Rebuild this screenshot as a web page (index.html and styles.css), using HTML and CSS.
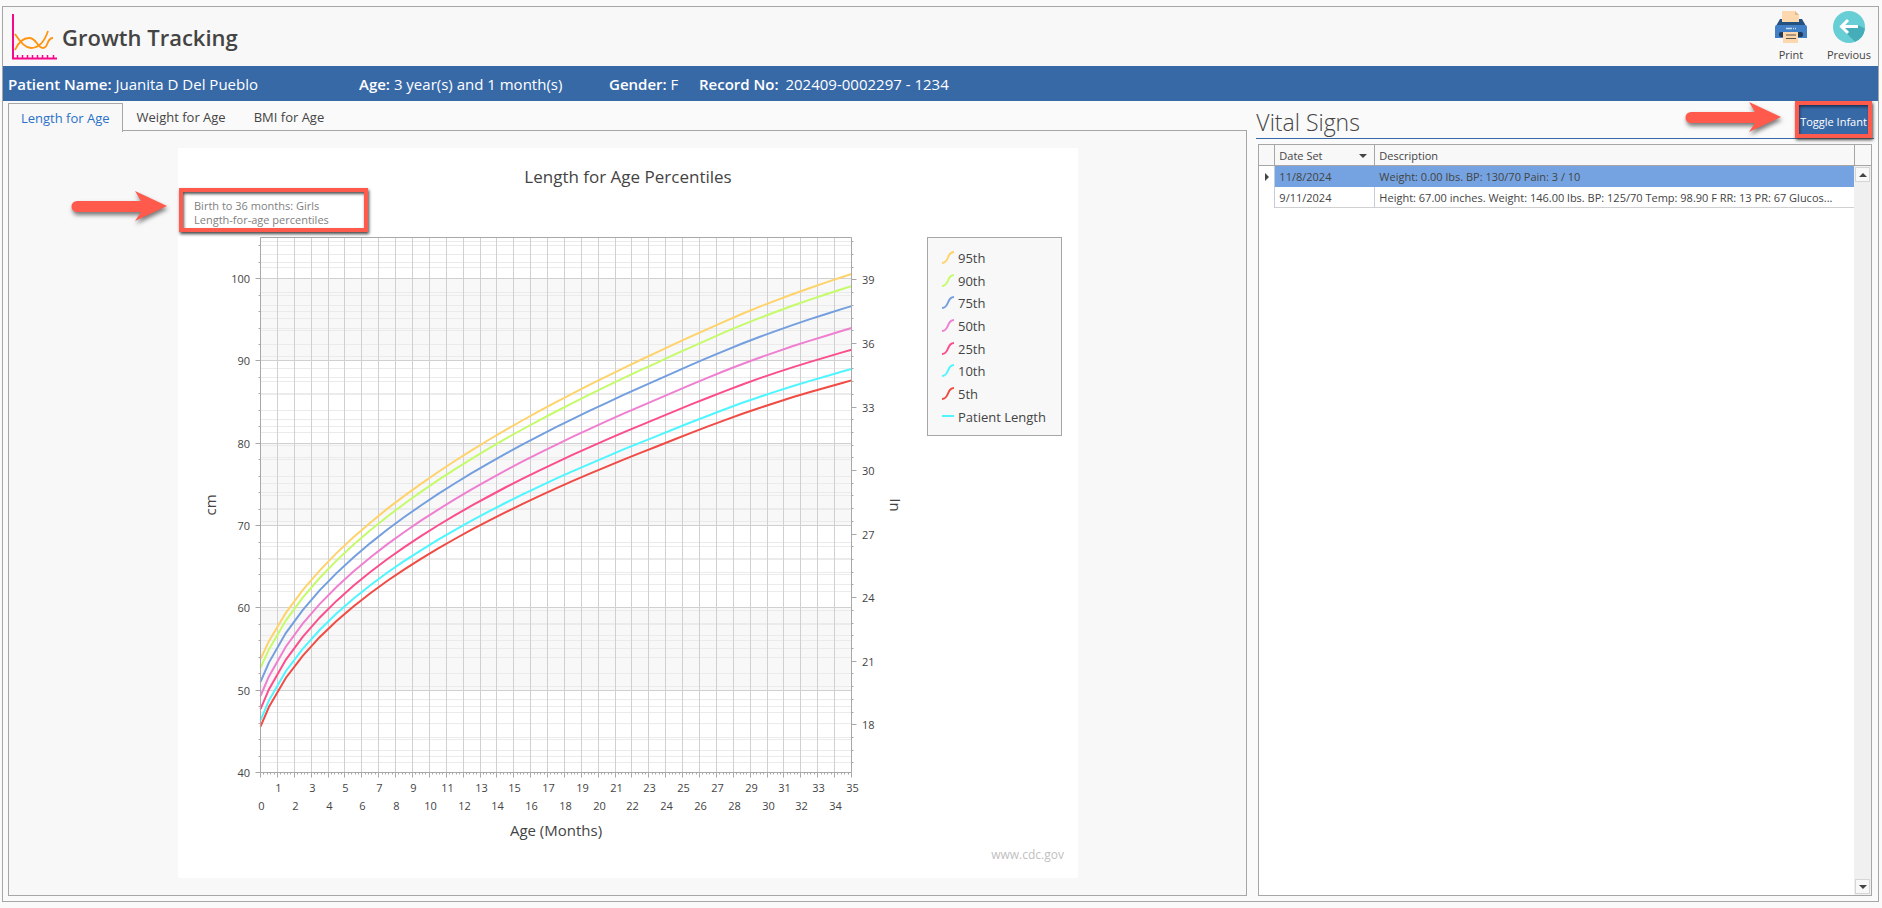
FILE: index.html
```html
<!DOCTYPE html>
<html lang="en">
<head>
  <meta charset="UTF-8" />
  <meta name="viewport" content="width=device-width, initial-scale=1.0"/>
  <title>Growth Tracking</title>
  <link rel="stylesheet" href="styles.css">
</head>
<body>

  <div class="window">
    <header class="header">
      <svg class="logo" viewBox="0 0 46 46" width="46" height="46" aria-hidden="true">
        <path d="M1 0V44.500H45" fill="none" stroke="#f7078a" stroke-width="2"/>
        <path d="M5.500 44v-3M10.500 44v-3M15.500 44v-3M20.500 44v-3M25.500 44v-3M30.500 44v-3M35.500 44v-3M41.500 44v-3" stroke="#f7078a" stroke-width="1.500"/>
        <path d="M3 20C8 28 13 34 19 34C28 34 33 26 36 17M3 36C7 27 12 24 17 24C25 24 25 34 31 34C37 34 34 24 41 24" fill="none" stroke="#ff9410" stroke-width="1.800"/>
      </svg>
      <h1>Growth Tracking</h1>
      <div class="actions">
        <button class="action" type="button">
          <svg viewBox="0 0 32 32" width="32" height="32" aria-hidden="true">
            <path d="M5 8h22l4 7H1z" fill="#25517f"/>
            <path d="M7 0h13l4 4v7H7z" fill="#fdd7ad"/>
            <path d="M20 0l4 4h-4z" fill="#dfb98e"/>
            <path d="M0 16q0-2 2-2h28q2 0 2 2v11H0z" fill="#4180c6"/>
            <path d="M11 17.500h6M18 17.500h1M20 17.500h1" stroke="#c5daf0" stroke-width="1.500"/>
            <rect x="4" y="21" width="24" height="5" rx="2" fill="#233d58"/>
            <path d="M8 21h15v11H8z" fill="#fdd7ad"/>
            <path d="M11 24h10M11 27.500h10" stroke="#5f5247" stroke-width="1"/>
          </svg>
          <span>Print</span>
        </button>
        <button class="action" type="button">
          <svg viewBox="0 0 32 32" width="32" height="32" aria-hidden="true">
            <circle cx="16" cy="16" r="16" fill="#68ced6"/>
            <path d="M8 17L22 30.800A16 16 0 0 0 31.900 17.500L25 14z" fill="#45adb7"/>
            <path d="M25 15.500H9M15 9L8.500 15.500L15 22" fill="none" stroke="#fff" stroke-width="3"/>
          </svg>
          <span>Previous</span>
        </button>
      </div>
    </header>

    <div class="patient-bar">
      <div><b>Patient Name:</b> Juanita D Del Pueblo</div>
      <div><b>Age:</b> 3 year(s) and 1 month(s)</div>
      <div><b>Gender:</b> F</div>
      <div class="record"><b>Record No:</b> <span>202409-0002297 - 1234</span></div>
    </div>

    <main class="content">
      <section class="charts">
        <div class="tabs" role="tablist">
          <button class="tab active" role="tab" type="button" aria-selected="true">Length for Age</button>
          <button class="tab" role="tab" type="button">Weight for Age</button>
          <button class="tab" role="tab" type="button">BMI for Age</button>
        </div>
        <div class="tab-panel">
          <div class="sheet">
            <svg id="chart" class="chart" viewBox="0 0 900 730"></svg>
            <div class="callout callout-subtitle"></div>
            <svg class="arrow arrow-subtitle" viewBox="0 0 98 34" width="98" height="34" aria-hidden="true">
              <path d="M6 11H70L64 1L96 16L64 31L70 22L6 22A5.500 5.500 0 0 1 6 11z"/>
            </svg>
          </div>
        </div>
      </section>

      <section class="vitals">
        <div class="vitals-head">
          <h2>Vital Signs</h2>
          <button class="toggle" type="button">Toggle Infant</button>
          <svg class="arrow arrow-toggle" viewBox="0 0 98 34" width="98" height="34" aria-hidden="true">
            <path d="M6 11H70L64 1L96 16L64 31L70 22L6 22A5.500 5.500 0 0 1 6 11z"/>
          </svg>
        </div>
        <div class="grid-box">
          <table>
            <thead>
              <tr>
                <th class="marker"></th>
                <th class="date">Date Set <i class="triangle down"></i></th>
                <th>Description</th>
              </tr>
            </thead>
            <tbody>
              <tr class="selected">
                <td class="marker"><i class="triangle right"></i></td>
                <td>11/8/2024</td>
                <td>Weight: 0.00 lbs. BP: 130/70 Pain: 3 / 10</td>
              </tr>
              <tr>
                <td class="marker"></td>
                <td>9/11/2024</td>
                <td>Height: 67.00 inches. Weight: 146.00 lbs. BP: 125/70 Temp: 98.90 F RR: 13 PR: 67 Glucos...</td>
              </tr>
            </tbody>
          </table>
          <div class="scroll">
            <div class="scroll-head"></div>
            <div class="scroll-track">
              <button type="button" aria-label="Scroll up"><i class="triangle up"></i></button>
              <button type="button" aria-label="Scroll down"><i class="triangle down"></i></button>
            </div>
          </div>
        </div>
      </section>
    </main>
  </div>

  <script>
    const chart = document.getElementById("chart");

    // plot area inside the 900x730 sheet
    const plot = { left: 82.5, top: 89.5, right: 673.5, bottom: 624.5 };
    const months = 35;
    const cmMin = 40, cmMax = 105;
    const inMin = 15.75, inMax = 41;

    const series = [
      { name: "95th", z: 1.645, color: "#ffd36b" },
      { name: "90th", z: 1.282, color: "#c5fb6b" },
      { name: "75th", z: 0.674, color: "#749fdf" },
      { name: "50th", z: 0, color: "#ef7fd0" },
      { name: "25th", z: -0.674, color: "#fb4e8c" },
      { name: "10th", z: -1.282, color: "#4ff5ff" },
      { name: "5th", z: -1.645, color: "#f04b45" }
    ];

    // age in months, L, M, S
    const lms = [
      [0, -1.296, 49.29, 0.0501], [0.5, -0.809, 51.68, 0.0468], [1.5, -0.051, 55.29, 0.0434],
      [2.5, 0.477, 58.09, 0.0417], [3.5, 0.843, 60.46, 0.0407], [4.5, 1.098, 62.54, 0.0401],
      [5.5, 1.273, 64.41, 0.0397], [6.5, 1.39, 66.12, 0.0394], [7.5, 1.467, 67.71, 0.0393],
      [8.5, 1.512, 69.19, 0.0392], [9.5, 1.535, 70.59, 0.0392], [10.5, 1.54, 71.92, 0.0392],
      [11.5, 1.533, 73.19, 0.0393], [12.5, 1.516, 74.4, 0.0394], [13.5, 1.49, 75.56, 0.0395],
      [14.5, 1.46, 76.68, 0.0396], [15.5, 1.42, 77.76, 0.0397], [16.5, 1.38, 78.8, 0.0398],
      [17.5, 1.34, 79.81, 0.0399], [18.5, 1.3, 80.8, 0.04], [19.5, 1.25, 81.75, 0.0402],
      [20.5, 1.2, 82.68, 0.0403], [21.5, 1.16, 83.6, 0.0404], [22.5, 1.12, 84.49, 0.0406],
      [23.5, 1.08, 85.36, 0.0407], [24.5, 1.04, 86.25, 0.0408], [25.5, 1, 87.12, 0.0409],
      [26.5, 0.95, 87.97, 0.041], [27.5, 0.9, 88.8, 0.0411], [28.5, 0.85, 89.6, 0.0412],
      [29.5, 0.8, 90.36, 0.0413], [30.5, 0.75, 91.08, 0.0414], [31.5, 0.7, 91.78, 0.0415],
      [32.5, 0.65, 92.44, 0.0416], [33.5, 0.6, 93.07, 0.0417], [34.5, 0.56, 93.7, 0.0418],
      [35, 0.55, 94, 0.0418]
    ];

    const xPos = m => plot.left + m * (plot.right - plot.left) / months;
    const cmPos = v => plot.bottom - (v - cmMin) * (plot.bottom - plot.top) / (cmMax - cmMin);
    const inPos = v => plot.bottom - (v - inMin) * (plot.bottom - plot.top) / (inMax - inMin);
    const snap = v => Math.floor(v) + 0.5;

    let out = "";

    function line(x1, y1, x2, y2, cls) {
      out += `<line x1="${x1}" y1="${y1}" x2="${x2}" y2="${y2}" class="${cls}"/>`;
    }

    function label(x, y, text, cls) {
      out += `<text x="${x}" y="${y}" class="${cls}">${text}</text>`;
    }

    // bands
    for (const top of [100, 80, 60]) {
      out += `<rect x="${plot.left}" y="${cmPos(top)}" width="${plot.right - plot.left}" height="${cmPos(top - 10) - cmPos(top)}" class="band"/>`;
    }

    // minor grid
    for (let v = 42; v < cmMax; v += 2) {
      const y = snap(cmPos(v));
      if (v % 10) {
        line(plot.left, y, plot.right, y, "minor");
        line(plot.left - 2, y, plot.left, y, "axis");
      }
    }
    for (let i = -3; i <= 38; i++) {
      const v = 18 + i * 0.6;
      const y = snap(inPos(v));
      if (i % 5) {
        line(plot.left, y, plot.right, y, "minor");
        line(plot.right, y, plot.right + 2, y, "axis");
      } else {
        line(plot.right, y, plot.right + 5, y, "axis");
        label(684, y + 4, Math.round(v), "tick");
      }
    }

    // major grid
    for (let m = 0; m <= months; m++) {
      const x = snap(xPos(m));
      line(x, plot.top, x, plot.bottom, "major");
      line(x, plot.bottom, x, plot.bottom + 5, "axis");
      label(x + 1, m % 2 ? 644 : 662, m, "tick middle");
      for (let k = 1; k < 5 && m < months; k++) {
        const t = snap(xPos(m + k / 5));
        line(t, plot.bottom, t, plot.bottom + 2, "axis");
      }
    }
    for (let v = 40; v <= 100; v += 10) {
      const y = snap(cmPos(v));
      line(plot.left, y, plot.right, y, "major");
      line(plot.left - 5, y, plot.left, y, "axis");
      label(72, y + 4, v, "tick end");
    }

    // percentile curves
    for (const s of series.slice().reverse()) {
      const points = lms.map(([age, L, M, S]) => {
        const value = M * Math.pow(1 + L * S * s.z, 1 / L);
        return xPos(age).toFixed(1) + "," + cmPos(value).toFixed(1);
      });
      out += `<polyline points="${points.join(" ")}" class="curve" stroke="${s.color}"/>`;
    }

    out += `<path d="M${plot.left} ${plot.top}V${plot.bottom}H${plot.right}V${plot.top}z" class="axis"/>`;

    label(450, 35, "Length for Age Percentiles", "title middle");
    label(16, 62, "Birth to 36 months: Girls", "subtitle");
    label(16, 76, "Length-for-age percentiles", "subtitle");
    label(378, 688, "Age (Months)", "axis-title middle");
    out += `<text transform="translate(38 357) rotate(-90)" class="axis-title middle">cm</text>`;
    out += `<text transform="translate(712 357) rotate(90)" class="axis-title middle">In</text>`;
    label(886, 711, "www.cdc.gov", "source end");

    // legend
    out += `<rect x="749.5" y="89.500" width="134" height="198" class="legend"/>`;
    series.forEach((s, i) => {
      const y = Math.round(110 + i * 22.67);
      out += `<path d="M764 ${y + 5}c8 0 4 -11 12 -11" class="curve" stroke="${s.color}"/>`;
      label(780, y + 5, s.name, "legend-text");
    });
    out += `<path d="M764 268h12" class="curve" stroke="#4ff5ff"/>`;
    label(780, 274, "Patient Length", "legend-text");

    chart.innerHTML = out;
  </script>

</body>
</html>
```
FILE: styles.css
```css
:root {
  --blue: #3869a7;
  --line: #a6a6a6;
  --text: #444;
  --red: #ff5a4c;
  --panel: #f8f8f8;
}

* {
  box-sizing: border-box;
}

body {
  margin: 0;
  height: 100vh;
  padding: 6px 3px 6px 2px;
  background: #fafafa;
  color: var(--text);
  font-family: "Open Sans", "Noto Sans", sans-serif;
  font-size: 12px;
}

button {
  font: inherit;
  color: inherit;
  border: none;
  background: none;
  padding: 0;
  cursor: pointer;
}

.window {
  display: flex;
  flex-direction: column;
  height: 100%;
  border: 1px solid var(--line);
}

.header {
  display: flex;
  align-items: center;
  height: 59px;
  padding: 0 4px 0 9px;
  background: var(--panel);
}

h1 {
  margin: 0 0 0 4px;
  font-size: 22px;
  font-weight: 600;
}

.actions {
  display: flex;
  align-self: flex-start;
  gap: 8px;
  margin: 4px 0 0 auto;
}

.action {
  display: flex;
  flex-direction: column;
  align-items: center;
  gap: 3px;
  min-width: 50px;
  font-size: 11px;
  line-height: 18px;
}

.patient-bar {
  display: grid;
  grid-template-columns: 351px 250px 90px auto;
  align-items: center;
  height: 35px;
  flex: none;
  padding-left: 5px;
  background: var(--blue);
  color: #fff;
  font-size: 15px;
  white-space: nowrap;
}

.patient-bar b {
  font-weight: 600;
}

.record span {
  margin-left: 3px;
}

.content {
  display: flex;
  flex: 1;
  gap: 9px;
  min-height: 0;
  padding: 2px 4px 5px 5px;
}

.charts {
  display: flex;
  flex: 1;
  flex-direction: column;
  min-width: 0;
}

.tabs {
  display: flex;
  height: 28px;
}

.tab {
  padding: 0 14px;
  font-size: 13px;
}

.tab.active {
  margin-bottom: -1px;
  padding: 0 12px;
  border: 1px solid var(--line);
  border-bottom: none;
  background: var(--panel);
  color: #2a72c8;
  z-index: 1;
}

.tab-panel {
  flex: 1;
  min-height: 0;
  margin-top: -1px;
  padding-top: 17px;
  border: 1px solid var(--line);
  background: var(--panel);
}

.sheet {
  position: relative;
  width: 100%;
  max-width: 900px;
  margin: 0 auto;
  background: #fff;
}

.chart {
  display: block;
  width: 100%;
  fill: var(--text);
}

.chart .band {
  fill: #f8f8f8;
}

.chart .minor {
  stroke: #ebebeb;
}

.chart .major {
  stroke: #d0d0d0;
}

.chart .axis {
  fill: none;
  stroke: #a8a8a8;
}

.chart .curve {
  fill: none;
  stroke-width: 2;
}

.chart .legend {
  fill: #f8f8f8;
  stroke: #a6a6a6;
}

.title {
  font-size: 17px;
}

.axis-title {
  font-size: 15px;
}

.legend-text {
  font-size: 13px;
}

.tick {
  font-size: 11px;
}

.subtitle {
  font-size: 11px;
  fill: #7f7f7f;
}

.source {
  font-size: 12px;
  fill: #bfbfbf;
}

.middle {
  text-anchor: middle;
}

.end {
  text-anchor: end;
}

.callout {
  position: absolute;
  border: 4px solid var(--red);
  box-shadow: 1px 2px 3px #444, inset 1px 2px 3px #555;
}

.callout-subtitle {
  left: 1px;
  top: 40px;
  width: 189px;
  height: 44px;
}

.arrow {
  position: absolute;
  overflow: visible;
  fill: var(--red);
  filter: drop-shadow(1px 3px 2px #777);
}

.arrow-subtitle {
  left: -107px;
  top: 42px;
}

.vitals {
  display: flex;
  flex-direction: column;
  width: 33.1%;
}

.vitals-head {
  position: relative;
  display: flex;
  justify-content: space-between;
  align-items: center;
  height: 36px;
  border-bottom: 1px solid var(--blue);
}

h2 {
  margin: 0;
  padding-top: 2px;
  font-size: 23px;
  font-weight: 300;
}

.toggle {
  align-self: flex-start;
  width: 77px;
  height: 37px;
  margin: -2px 2px 0 0;
  padding-top: 3px;
  border: 4px solid var(--red);
  background: var(--blue);
  box-shadow: 1px 2px 3px #444, inset 1px 2px 3px #1c355a;
  color: #fff;
  font-size: 11px;
  white-space: nowrap;
  z-index: 1;
}

.arrow-toggle {
  right: 91px;
  top: -2px;
}

.grid-box {
  display: flex;
  flex: 1;
  margin: 5px 2px 0 2px;
  border: 1px solid var(--line);
  background: #fff;
}

table {
  flex: 1;
  min-width: 0;
  align-self: flex-start;
  table-layout: fixed;
  border-collapse: separate;
  border-spacing: 0;
  font-size: 11px;
}

th, td {
  height: 21px;
  padding: 0 4px;
  border-right: 1px solid #c6cdd8;
  border-bottom: 1px solid #d0d0d0;
  overflow: hidden;
  text-align: left;
  font-weight: 400;
  white-space: nowrap;
}

th {
  border-color: var(--line);
  background: var(--panel);
}

th.marker {
  width: 16px;
}

th.date {
  width: 100px;
}

td.marker {
  padding: 0 0 0 6px;
  border-bottom: none;
}

th:last-child, td:last-child {
  border-right: none;
}

.selected td:not(.marker) {
  border-color: #75a3e1;
  background: #75a3e1;
}

.triangle {
  display: inline-block;
  border: 4px solid transparent;
}

.triangle.down {
  border-top-color: #444;
  border-bottom: none;
}

.triangle.up {
  border-bottom-color: #444;
  border-top: none;
}

.triangle.right {
  border-left-color: #444;
  border-right: none;
}

.date .triangle {
  float: right;
  margin: 6px 3px 0 0;
}

.scroll {
  display: flex;
  flex-direction: column;
  width: 17px;
}

.scroll-head {
  height: 21px;
  border-left: 1px solid var(--line);
  border-bottom: 1px solid var(--line);
  background: var(--panel);
}

.scroll-track {
  display: flex;
  flex: 1;
  flex-direction: column;
  justify-content: space-between;
  padding: 1px;
  background: #f0f0f0;
}

.scroll-track button {
  display: flex;
  align-items: center;
  justify-content: center;
  height: 15px;
  border: 1px solid #d6d6d6;
  background: #f8f8f8;
}
```
